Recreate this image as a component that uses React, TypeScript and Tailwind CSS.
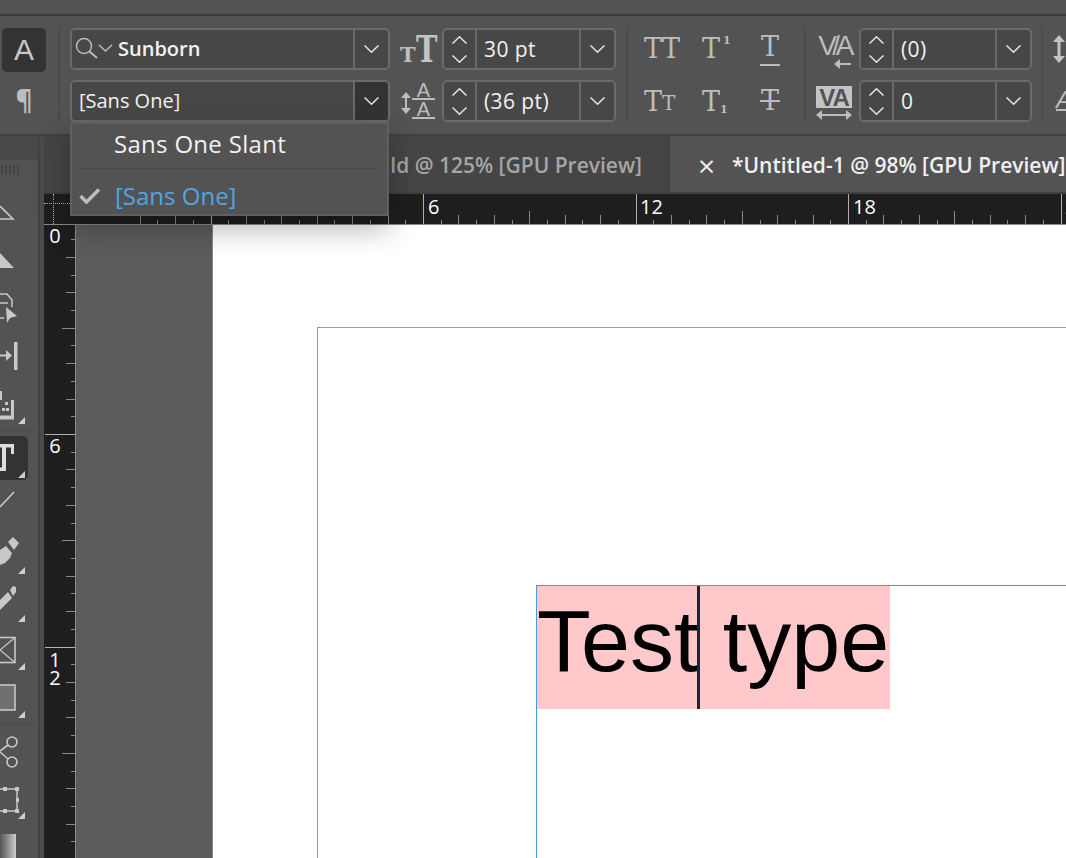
import type { ReactNode } from 'react';

const uiFont = "font-['Open_Sans',sans-serif]";

const Chevron = ({ up = false, w = 15 }: { up?: boolean; w?: number }) => (
  <svg width={w} height={8} viewBox="0 0 15 8" fill="none" stroke="#e6e6e6" strokeWidth="1.5">
    <polyline points={up ? '0.5,7.5 7.5,0.8 14.5,7.5' : '0.5,0.5 7.5,7.2 14.5,0.5'} />
  </svg>
);

const NumberBox = ({ value, width }: { value: string; width: string }) => (
  <div className={`flex h-[42px] shrink-0 rounded-[5px] border-2 border-[#6a6a6a] bg-[#474747] ${width}`}>
    <div className="flex w-[33px] flex-col items-center justify-center gap-[11px] border-r-2 border-[#6a6a6a]">
      <Chevron up />
      <Chevron />
    </div>
    <div className="flex-1 pl-[7px] text-[21px] font-medium leading-[38px] tracking-[0.4px] text-[#f2f2f2]">{value}</div>
    <div className="flex w-[35px] items-center justify-center border-l-2 border-[#6a6a6a]">
      <Chevron />
    </div>
  </div>
);

const Separator = ({ className }: { className: string }) => <div className={`h-[92px] w-[2px] shrink-0 bg-[#4b4b4b] ${className}`} />;

const SerifT = ({ size = 'text-[27px]' }: { size?: string }) => (
  <span className={`font-['DejaVu_Serif',serif] leading-none text-[#bdbdbd] ${size}`}>T</span>
);

const FontColumn = () => (
  <div className="ml-[10px] flex w-[320px] shrink-0 flex-col gap-[10px]">
    <div className="flex h-[42px] rounded-[5px] border-2 border-[#6a6a6a] bg-[#474747]">
      <div className="flex flex-1 items-center pl-[3px]">
        <svg width="42" height="24" viewBox="0 0 42 24" fill="none" stroke="#bcbcbc" strokeWidth="1.5">
          <circle cx="9" cy="9" r="7.5" />
          <line x1="14.5" y1="14.5" x2="22" y2="21" strokeWidth="2" />
          <polyline points="24,8 30.5,14 37,8" />
        </svg>
        <span className="ml-[1px] text-[20px] font-semibold text-[#f2f2f2]">Sunborn</span>
      </div>
      <div className="flex w-[35px] items-center justify-center border-l-2 border-[#6a6a6a]">
        <Chevron />
      </div>
    </div>
    <div className="flex h-[42px] rounded-[5px] border-2 border-[#6a6a6a] bg-[#474747]">
      <div className="flex-1 pl-[7px] text-[20px] font-medium leading-[38px] text-[#f2f2f2]">[Sans One]</div>
      <div className="flex w-[35px] items-center justify-center rounded-r-[3px] border-l-2 border-[#6a6a6a] bg-[#333333]">
        <Chevron />
      </div>
    </div>
  </div>
);

const SizeIcons = () => (
  <div className="ml-[10px] flex w-[36px] shrink-0 flex-col gap-[10px]">
    <div className="flex h-[42px] items-end justify-start pb-[6px]">
      <span className="w-[16px] font-['DejaVu_Serif',serif] text-[21px] font-bold leading-[18px] text-[#bdbdbd]">T</span>
      <span className="w-[20px] origin-left scale-x-[0.78] font-['DejaVu_Serif',serif] text-[37px] font-bold leading-[30px] text-[#c4c4c4]">T</span>
    </div>
    <div className="flex h-[42px] items-center">
      <svg width="12" height="22" viewBox="0 0 12 22" fill="#bdbdbd" className="mt-[4px] shrink-0">
        <polygon points="6,0 11,6 1,6" />
        <rect x="5" y="5" width="2" height="12" />
        <polygon points="6,22 11,16 1,16" />
      </svg>
      <div className="flex w-[23px] flex-col text-center font-['Liberation_Sans',sans-serif] text-[20px] leading-[15px] text-[#bdbdbd]">
        <span className="border-b-2 border-[#bdbdbd]">A</span>
        <span className="mt-[2px] border-b-2 border-[#bdbdbd]">A</span>
      </div>
    </div>
  </div>
);

const TypeStyles = () => (
  <div className="grid w-[176px] shrink-0 grid-cols-[58px_58px_58px] grid-rows-[42px_42px] gap-y-[10px] pl-[16px]">
    <div className="flex items-center pb-[2px]">
      <SerifT />
      <SerifT />
    </div>
    <div className="flex items-center pb-[2px]">
      <SerifT />
      <span className="mb-[16px] ml-[3px] font-['DejaVu_Serif',serif] text-[11px] font-bold leading-none text-[#bdbdbd]">1</span>
    </div>
    <div className="flex flex-col items-start pt-[5px]">
      <span className="w-[20px] border-b-2 border-[#bdbdbd] text-center leading-[27px]">
        <SerifT />
      </span>
    </div>
    <div className="flex items-center">
      <SerifT />
      <span className="mt-[6px]">
        <SerifT size="text-[20px]" />
      </span>
    </div>
    <div className="flex items-center">
      <SerifT />
      <span className="mt-[16px] font-['DejaVu_Serif',serif] text-[11px] font-bold leading-none text-[#bdbdbd]">1</span>
    </div>
    <div className="relative flex items-center">
      <span className="w-[20px] text-center">
        <SerifT />
      </span>
      <div className="absolute left-0 top-[20px] h-[2px] w-[20px] bg-[#bdbdbd]" />
    </div>
  </div>
);

const KerningIcons = () => (
  <div className="ml-[10px] flex w-[36px] shrink-0 flex-col gap-[10px] font-['Liberation_Sans',sans-serif]">
    <div className="flex h-[42px] flex-col items-center pt-[6px]">
      <span className="text-[28px] font-light leading-[24px] tracking-[-4.5px] text-[#bdbdbd]">V/A</span>
      <svg width="17" height="10" viewBox="0 0 17 10" fill="#bdbdbd" className="ml-[17px] mt-[1px]">
        <polygon points="0,5 6,0 6,10" />
        <rect x="5" y="4" width="12" height="2" />
      </svg>
    </div>
    <div className="flex h-[42px] flex-col items-center pt-[6px]">
      <span className="h-[22px] w-[36px] bg-[#c4c4c4] text-center text-[24px] font-bold leading-[23px] tracking-[-1px] text-[#535353]">VA</span>
      <svg width="36" height="10" viewBox="0 0 36 10" fill="#bdbdbd" className="mt-[2px]">
        <polygon points="0,5 6,0 6,10" />
        <rect x="5" y="4" width="26" height="2" />
        <polygon points="36,5 30,0 30,10" />
      </svg>
    </div>
  </div>
);

const LeadingIcons = () => (
  <div className="ml-[9px] flex shrink-0 flex-col gap-[10px]">
    <div className="flex h-[42px] items-center">
      <svg width="14" height="28" viewBox="0 0 14 28" fill="#c4c4c4">
        <polygon points="7,0 13,7 1,7" />
        <rect x="5.5" y="6" width="3" height="16" />
        <polygon points="7,28 13,21 1,21" />
      </svg>
    </div>
    <div className="ml-[4px] flex h-[42px] items-end pb-[11px]">
      <span className="border-b-2 border-[#bdbdbd] font-['Liberation_Sans',sans-serif] text-[24px] font-light italic leading-[19px] text-[#bdbdbd]">A</span>
    </div>
  </div>
);

const Tool = ({ top, h, children }: { top: number; h: number; children: ReactNode }) => (
  <svg width="38" height={h} viewBox={`0 ${top} 38 ${h}`} className="block shrink-0">
    {children}
  </svg>
);

const Corner = ({ y }: { y: number }) => <polygon points={`18,${y + 7} 25,${y} 25,${y + 7}`} fill="#cfcfcf" />;

const ToolDivider = () => <div className="h-[1px] w-[36px] shrink-0 bg-[#4b4b4b]" />;

const Toolbar = () => (
  <div className="flex w-[38px] shrink-0 flex-col bg-[#535353]">
    <div className="h-[24px] shrink-0 bg-[#484848]" />
    <div className="flex h-[30px] shrink-0 gap-[2px] pl-[1px] pt-[5px]">
      {[0, 1, 2, 3, 4].map((n) => (
        <div key={n} className="h-[10px] w-[2px] bg-[#444444]" />
      ))}
    </div>
    <Tool top={190} h={47}>
      <polyline points="0,206 13,219 0,219" fill="none" stroke="#c8c8c8" strokeWidth="1.6" />
    </Tool>
    <Tool top={237} h={47}>
      <polygon points="0,253 14,268 0,268" fill="#c8c8c8" />
    </Tool>
    <Tool top={284} h={47}>
      <polyline points="0,294 7,294 12,300 12,307" fill="none" stroke="#c8c8c8" strokeWidth="1.5" />
      <line x1="0" y1="303" x2="8" y2="303" stroke="#c8c8c8" strokeWidth="1.5" />
      <polygon points="6,307 17,316 10,318 7,323" fill="#c8c8c8" />
      <line x1="0" y1="318" x2="4" y2="318" stroke="#c8c8c8" strokeWidth="1.5" />
    </Tool>
    <Tool top={331} h={49}>
      <rect x="14" y="342" width="3.5" height="28" fill="#c8c8c8" />
      <rect x="0" y="354.5" width="8" height="2" fill="#c8c8c8" />
      <polygon points="6,350 12,355.5 6,361" fill="#c8c8c8" />
    </Tool>
    <Tool top={380} h={50}>
      <path d="M11 400h3v19.5H0v-4h11z" fill="#c8c8c8" />
      <rect x="0" y="391" width="2" height="9" fill="#c8c8c8" />
      <rect x="5" y="402" width="3" height="3" fill="#c8c8c8" />
      <rect x="2" y="408" width="3" height="3" fill="#c8c8c8" />
      <rect x="6" y="408" width="3" height="3" fill="#c8c8c8" />
      <Corner y={417} />
    </Tool>
    <ToolDivider />
    <div className="h-[53px] shrink-0 pt-[5px]">
      <div className="h-[44px] w-[28px] rounded-r-[5px] bg-[#333333]">
        <Tool top={436} h={44}>
          <path d="M0 444h14v10h-3v-6.500H6v19.500h0v4H0v-3.500h2V447.500H0z" fill="#dcdcdc" />
          <Corner y={471} />
        </Tool>
      </div>
    </div>
    <Tool top={484} h={46}>
      <line x1="0" y1="507" x2="14" y2="492" stroke="#c8c8c8" strokeWidth="1.6" />
    </Tool>
    <Tool top={530} h={48}>
      <polygon points="8,542 13,537 19,543 14,550" fill="#c8c8c8" />
      <path d="M0 550l6-4 6 7-2 5-5 5-5 2z" fill="#c8c8c8" />
      <Corner y={567} />
    </Tool>
    <Tool top={578} h={47}>
      <polygon points="10,590 13,586 16,587 16,592 13,596" fill="#c8c8c8" />
      <polygon points="0,600 8,592 12,598 0,610" fill="#c8c8c8" />
      <Corner y={615} />
    </Tool>
    <Tool top={625} h={50}>
      <rect x="-2" y="637.500" width="17" height="25" fill="none" stroke="#c8c8c8" strokeWidth="1.6" />
      <polyline points="15,637.500 0,650 15,662.500" fill="none" stroke="#c8c8c8" strokeWidth="1.3" />
      <Corner y={663} />
    </Tool>
    <Tool top={675} h={49}>
      <rect x="-2" y="685" width="17" height="25" fill="#707070" stroke="#c8c8c8" strokeWidth="1.6" />
      <Corner y={711} />
    </Tool>
    <ToolDivider />
    <Tool top={725} h={50}>
      <circle cx="12" cy="742" r="5" fill="none" stroke="#c8c8c8" strokeWidth="1.6" />
      <circle cx="12" cy="762" r="5" fill="none" stroke="#c8c8c8" strokeWidth="1.6" />
      <line x1="8" y1="745" x2="0" y2="751" stroke="#c8c8c8" strokeWidth="1.6" />
      <line x1="8" y1="759" x2="0" y2="752" stroke="#c8c8c8" strokeWidth="1.6" />
    </Tool>
    <Tool top={775} h={50}>
      <rect x="-2" y="789" width="19" height="22" fill="none" stroke="#c8c8c8" strokeWidth="1.5" />
      <rect x="3" y="787" width="4" height="4" fill="#c8c8c8" />
      <rect x="15" y="787" width="4" height="4" fill="#c8c8c8" />
      <rect x="16" y="798" width="3" height="4" fill="#c8c8c8" />
      <rect x="3" y="809" width="4" height="4" fill="#c8c8c8" />
      <rect x="15" y="809" width="4" height="4" fill="#c8c8c8" />
      <Corner y={812} />
    </Tool>
    <div className="mt-[9px] h-[24px] w-[16px] shrink-0 bg-gradient-to-r from-[#555555] to-[#cfcfcf]" />
  </div>
);

const ticks = Array.from({ length: 70 }, (_, i) => i);

const tickLength = (i: number) => {
  if (i % 12 === 0) return 30;
  if (i % 6 === 0) return 13;
  if (i % 2 === 0) return 9;
  return 4;
};

const HorizontalRuler = () => (
  <div className="relative h-[30px] flex-1 text-[20px] font-medium leading-none text-white">
    <svg width="990" height="30" className="block">
      {ticks.map((i) => {
        const x = Math.round(134.5 + (i - 4) * 17.71 + 0) + 0.5;
        const len = tickLength(i - 4 + 48);
        return <line key={i} x1={x} x2={x} y1={30 - len} y2={30} stroke={len === 30 ? '#b0b0b0' : '#8a8a8a'} />;
      })}
    </svg>
    <span className="absolute left-[352px] top-[3px]">6</span>
    <span className="absolute left-[564px] top-[3px]">12</span>
    <span className="absolute left-[777px] top-[3px]">18</span>
    <span className="absolute left-[989px] top-[3px] w-[20px]">24</span>
  </div>
);

const VerticalRuler = () => (
  <div className="relative h-[640px] w-[31px] shrink-0 bg-[#1e1e1e] text-center text-[20px] font-medium leading-[18px] text-white">
    <svg width="31" height="640" className="block">
      {ticks.map((i) => {
        const y = Math.round(-3.5 + i * 17.71) + 0.5;
        const len = tickLength(i);
        return <line key={i} x1={31 - len} x2={31} y1={y} y2={y} stroke={len === 30 ? '#b0b0b0' : '#8a8a8a'} />;
      })}
    </svg>
    <span className="absolute left-[5px] top-[2px] w-[12px]">0</span>
    <span className="absolute left-[5px] top-[212px] w-[12px]">6</span>
    <span className="absolute left-[5px] top-[426px] w-[12px]">1</span>
    <span className="absolute left-[5px] top-[444px] w-[12px]">2</span>
  </div>
);

const Page = () => (
  <div className="flex-1 bg-white pl-[104px] pt-[102px]">
    <div className="h-[600px] border-l border-t border-[#dc6fdc] pl-[218px] pt-[257px]">
      <div className="h-[300px] border-l border-t border-[#4a9bd0]">
        <div className="flex h-[123px] w-[353px] items-start bg-[#ffc8cb] font-['Liberation_Sans',sans-serif] text-[88px] leading-[110px] text-black">
          <span className="whitespace-pre">Test</span>
          <span className="relative h-[123px] w-0">
            <span className="absolute -left-[1px] top-0 h-[123px] w-[3px] bg-[#0d2f2f]" />
          </span>
          <span className="whitespace-pre"> type</span>
        </div>
      </div>
    </div>
  </div>
);

export default function App() {
  return (
    <div className={`relative flex h-[858px] w-[1066px] flex-col overflow-hidden bg-[#535353] ${uiFont}`}>
      <div className="h-[14px] shrink-0 bg-[#535353]" />
      <div className="h-[2px] shrink-0 bg-[#3c3c3c]" />
      <div className="flex h-[118px] shrink-0 overflow-hidden pt-[12px]">
        <div className="ml-[2px] flex w-[44px] shrink-0 flex-col items-center gap-[10px]">
          <div className="flex h-[44px] w-[44px] items-center justify-center rounded-[5px] bg-[#333333] font-['Liberation_Sans',sans-serif] text-[30px] font-light leading-none text-[#c8c8c8]">A</div>
          <div className="text-[26px] font-bold leading-[36px] text-[#bdbdbd]">¶</div>
        </div>
        <Separator className="ml-[12px]" />
        <FontColumn />
        <SizeIcons />
        <div className="ml-[6px] flex shrink-0 flex-col gap-[10px]">
          <NumberBox value="30 pt" width="w-[174px]" />
          <NumberBox value="(36 pt)" width="w-[174px]" />
        </div>
        <Separator className="ml-[10px]" />
        <TypeStyles />
        <Separator className="" />
        <KerningIcons />
        <div className="ml-[7px] flex shrink-0 flex-col gap-[10px]">
          <NumberBox value="(0)" width="w-[173px]" />
          <NumberBox value="0" width="w-[173px]" />
        </div>
        <Separator className="ml-[9px]" />
        <LeadingIcons />
      </div>
      <div className="h-[2px] shrink-0 bg-[#3f3f3f]" />

      <div className="flex min-h-0 flex-1">
        <Toolbar />
        <div className="w-[2px] shrink-0 bg-[#424242]" />
        <div className="w-[4px] shrink-0 bg-[#4b4b4b]" />
        <div className="flex min-w-0 flex-1 flex-col">
          <div className="flex h-[56px] shrink-0 bg-[#454545]">
            <div className="flex w-[626px] shrink-0 items-center justify-end border-r-2 border-[#414141] pr-[26px] pt-[3px] text-[21px] font-semibold text-[#a6a6a6]">
              <span className="whitespace-nowrap">ld @ 125% [GPU Preview]</span>
            </div>
            <div className="flex flex-1 items-center overflow-hidden bg-[#535353] pl-[28px] pt-[3px] text-[21px] font-semibold whitespace-nowrap text-[#f0f0f0]">
              <span className="w-[34px] shrink-0 text-[30px] font-normal leading-none">×</span>
              <span>*Untitled-1 @ 98% [GPU Preview]</span>
            </div>
          </div>
          <div className="h-[2px] shrink-0 bg-[#3f3f3f]" />
          <div className="flex h-[30px] shrink-0 bg-[#1e1e1e]">
            <div className="relative w-[32px] shrink-0">
              <div className="absolute left-0 top-[9px] w-[28px] border-t border-dotted border-[#b0b0b0]" />
              <div className="absolute left-[9px] top-0 h-[30px] border-l border-dotted border-[#b0b0b0]" />
            </div>
            <HorizontalRuler />
          </div>
          <div className="h-[1px] shrink-0 bg-[#8a8a8a]" />
          <div className="flex min-h-0 flex-1">
            <VerticalRuler />
            <div className="w-[1px] shrink-0 bg-[#8a8a8a]" />
            <div className="w-[136px] shrink-0 bg-[#5c5c5c]" />
            <div className="w-[1px] shrink-0 bg-[#8a8a8a]" />
            <Page />
          </div>
        </div>
      </div>

      <div className="absolute left-[70px] top-[122px] h-[94px] w-[319px] border-2 border-[#5f5f5f] bg-[#535353] shadow-[0_12px_28px_rgba(0,0,0,0.3)]">
        <div className="h-[44px] pl-[42px] text-[24px] leading-[40px] tracking-[0.3px] text-[#f2f2f2]">Sans One Slant</div>
        <div className="mx-[7px] h-[1px] bg-[#494949]" />
        <div className="flex h-[46px] items-center pt-[8px]">
          <svg width="22" height="16" viewBox="0 0 22 16" fill="none" stroke="#bdbdbd" strokeWidth="3.500" className="ml-[7px]">
            <polyline points="1.500,8 7.500,14 20,1.500" />
          </svg>
          <span className="ml-[14px] text-[24px] text-[#52a5e3]">[Sans One]</span>
        </div>
      </div>
    </div>
  );
}
